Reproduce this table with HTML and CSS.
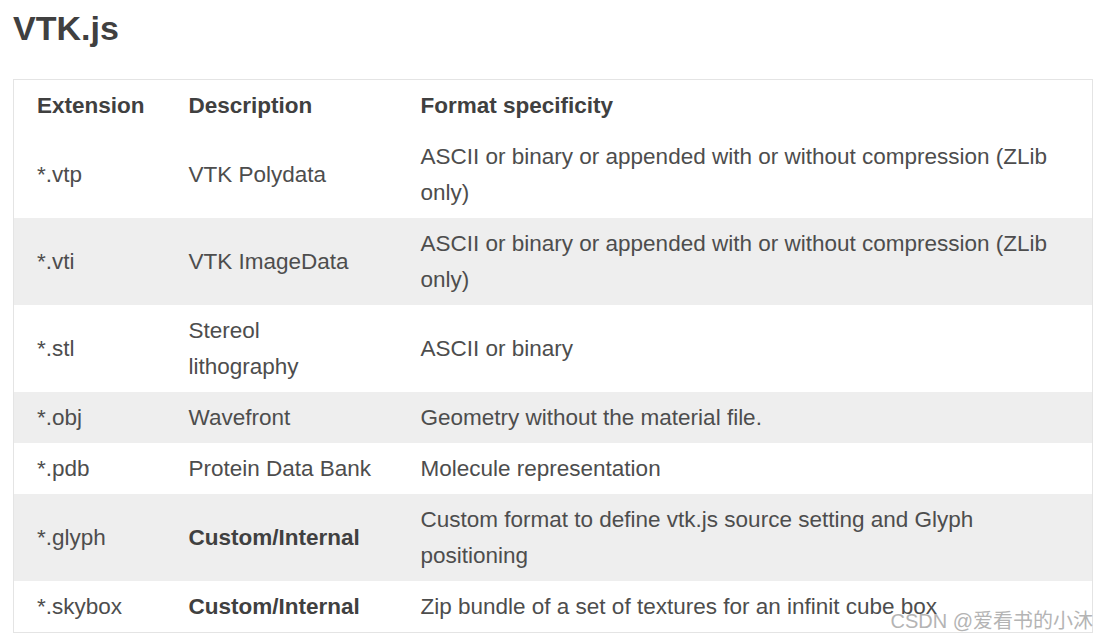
FILE: index.html
```html
<!DOCTYPE html>
<html lang="en">
<head>
<meta charset="utf-8">
<title>VTK.js</title>
<link rel="stylesheet" href="styles.css">
</head>
<body>
<main class="page">
  <h2 class="title">VTK.js</h2>
  <table class="formats">
    <colgroup>
      <col class="c-ext">
      <col class="c-desc">
      <col class="c-spec">
    </colgroup>
    <thead>
      <tr><th>Extension</th><th>Description</th><th>Format specificity</th></tr>
    </thead>
    <tbody>
      <tr><td>*.vtp</td><td>VTK Polydata</td><td>ASCII or binary or appended with or without compression (ZLib only)</td></tr>
      <tr><td>*.vti</td><td>VTK ImageData</td><td>ASCII or binary or appended with or without compression (ZLib only)</td></tr>
      <tr><td>*.stl</td><td>Stereol lithography</td><td>ASCII or binary</td></tr>
      <tr><td>*.obj</td><td>Wavefront</td><td>Geometry without the material file.</td></tr>
      <tr><td>*.pdb</td><td>Protein Data Bank</td><td>Molecule representation</td></tr>
      <tr><td>*.glyph</td><td><strong>Custom/Internal</strong></td><td>Custom format to define vtk.js source setting and Glyph positioning</td></tr>
      <tr><td>*.skybox</td><td><strong>Custom/Internal</strong></td><td>Zip bundle of a set of textures for an infinit cube box</td></tr>
    </tbody>
  </table>
  <div class="watermark">CSDN @爱看书的小沐</div>
</main>
</body>
</html>
```
FILE: styles.css
```css
html, body {
  margin: 0;
  padding: 0;
  background: #fff;
}
body {
  font-family: "Liberation Sans", Arial, "Noto Sans CJK SC", sans-serif;
  color: #4d4d4d;
}
.page {
  position: relative;
  padding: 0 5px 0 13px;
  width: 1080px;
  height: 639px;
}
.title {
  margin: 0;
  padding-top: 8px;
  font-size: 34px;
  line-height: 40px;
  font-weight: bold;
  color: #404040;
  height: 71px;
}
.formats {
  width: 1080px;
  border-collapse: collapse;
  border: 1px solid #e4e4e4;
  table-layout: fixed;
  font-size: 22.5px;
  line-height: 36px;
}
.c-ext { width: 152px; }
.c-desc { width: 232px; }
.formats th,
.formats td {
  text-align: left;
  vertical-align: middle;
  padding: 8px 24px 7px 23px;
}
.formats td:nth-child(2) {
  padding-right: 24px;
}
.formats th {
  font-weight: bold;
  color: #404040;
}
.formats strong {
  color: #404040;
}
.formats tbody tr:nth-child(even) {
  background: #eeeeee;
}
.watermark {
  position: absolute;
  right: 5px;
  top: 608px;
  font-size: 20px;
  line-height: 26px;
  color: #b4b4b4;
  white-space: nowrap;
}
```
